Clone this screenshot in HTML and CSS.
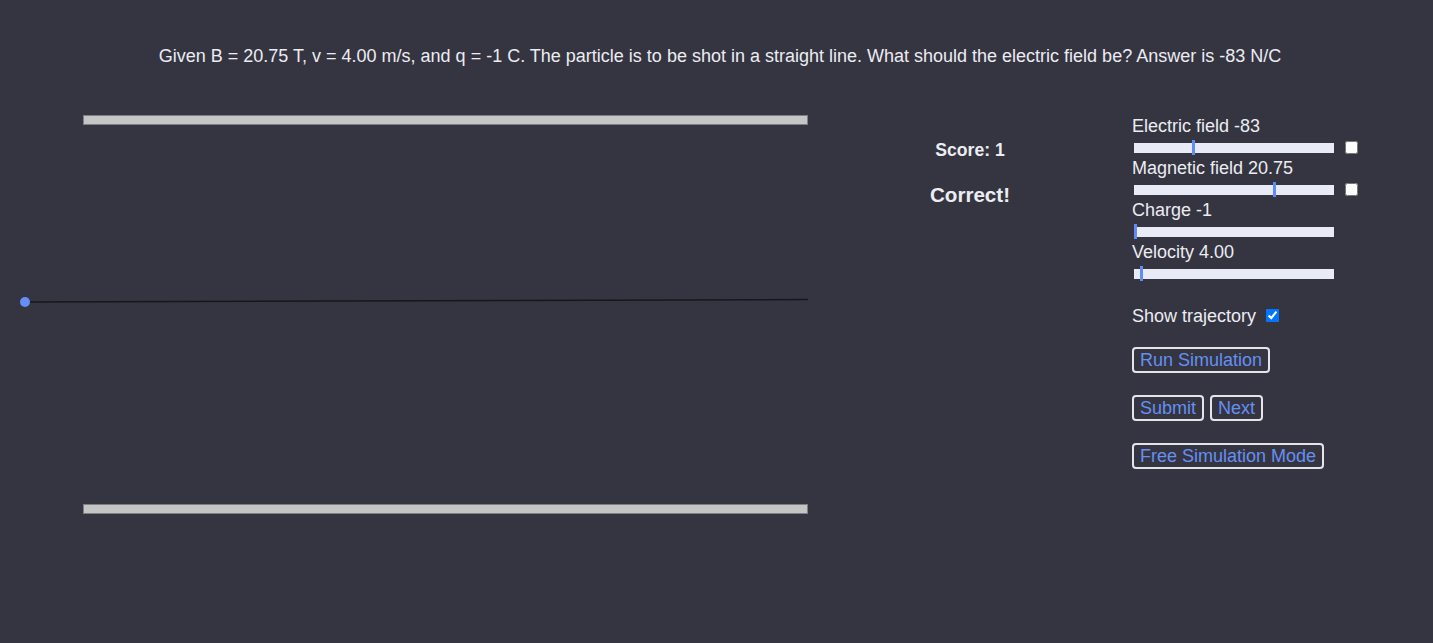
FILE: index.html
```html
<!DOCTYPE html>
<html lang="en">
<head>
<meta charset="utf-8">
<title>Velocity Selector</title>
<link rel="stylesheet" href="styles.css">
</head>
<body>
<p class="question">Given B = 20.75 T, v = 4.00 m/s, and q = -1 C. The particle is to be shot in a straight line. What should the electric field be? Answer is -83 N/C</p>
<main class="main">
  <svg class="sim" width="820" height="440" viewBox="0 0 820 440">
    <rect x="83.5" y="15.5" width="724" height="9" fill="#c5c5c5" stroke="#7e7e86" stroke-width="1"/>
    <rect x="83.5" y="404.5" width="724" height="9" fill="#c5c5c5" stroke="#7e7e86" stroke-width="1"/>
    <path d="M25 202 L808 199.6" stroke="#17171b" stroke-width="1.5" fill="none"/>
    <circle cx="25" cy="202" r="5" fill="#6490f5"/>
  </svg>
  <section class="status">
    <p class="score">Score: 1</p>
    <h3 class="result">Correct!</h3>
  </section>
  <section class="controls">
    <div class="control">
      <label class="control-label">Electric field -83</label>
      <div class="slider-row">
        <input type="range" class="slider" min="-200" max="200" step="1" value="-83">
        <input type="checkbox" class="check">
      </div>
    </div>
    <div class="control">
      <label class="control-label">Magnetic field 20.75</label>
      <div class="slider-row">
        <input type="range" class="slider" min="-50" max="50" step="0.01" value="20.75">
        <input type="checkbox" class="check">
      </div>
    </div>
    <div class="control">
      <label class="control-label">Charge -1</label>
      <div class="slider-row">
        <input type="range" class="slider" min="-1" max="1" step="1" value="-1">
      </div>
    </div>
    <div class="control">
      <label class="control-label">Velocity 4.00</label>
      <div class="slider-row">
        <input type="range" class="slider" min="1" max="100" step="0.01" value="4">
      </div>
    </div>
    <label class="toggle">Show trajectory <input type="checkbox" class="check toggle-check" checked></label>
    <div class="btn-row first"><button class="btn">Run Simulation</button></div>
    <div class="btn-row"><button class="btn">Submit</button><button class="btn">Next</button></div>
    <div class="btn-row"><button class="btn">Free Simulation Mode</button></div>
  </section>
</main>
</body>
</html>
```
FILE: styles.css
```css
html, body {
  margin: 0;
  padding: 0;
}
body {
  background: #343541;
  color: #ececf1;
  font-family: "Liberation Sans", Arial, Helvetica, sans-serif;
  font-size: 18px;
  line-height: 20px;
  min-height: 643px;
}
.question {
  margin: 46px 0 0 0;
  padding-left: 7px;
  height: 54px;
  text-align: center;
}
.main {
  display: flex;
  align-items: flex-start;
}
.sim {
  flex: none;
  display: block;
}
.status {
  flex: none;
  width: 300px;
  padding-top: 40px;
  text-align: center;
}
.score {
  margin: 0;
  font-size: 17.6px;
  font-weight: bold;
}
.result {
  margin: 23px 0 0 0;
  font-size: 20.6px;
  line-height: 24px;
  font-weight: bold;
}
.controls {
  flex: none;
  margin-left: 12px;
  padding-top: 15.6px;
  display: flex;
  flex-direction: column;
}
.control-label {
  display: block;
  line-height: 20px;
}
.slider-row {
  display: flex;
  align-items: center;
  height: 10px;
  margin: 7px 0 5px 2px;
}
.slider {
  -webkit-appearance: none;
  appearance: none;
  width: 200px;
  height: 10px;
  margin: 0;
  padding: 0;
  background: transparent;
  outline: none;
}
.slider::-webkit-slider-runnable-track {
  height: 10px;
  background: #e8eaf6;
  border: none;
}
.slider::-webkit-slider-thumb {
  -webkit-appearance: none;
  appearance: none;
  width: 3px;
  height: 15px;
  margin-top: -2.5px;
  background: #5f8cf5;
  border: none;
  border-radius: 0;
}
.check {
  width: 13px;
  height: 13px;
  margin: 0 0 0 11px;
  flex: none;
}
.toggle {
  margin-top: 22px;
  display: flex;
  align-items: center;
  line-height: 20px;
}
.toggle-check {
  margin-left: 10px;
}
.btn-row {
  display: flex;
  gap: 6px;
  margin-top: 22px;
}
.btn-row.first {
  margin-top: 21px;
}
.btn {
  font-family: inherit;
  font-size: 18px;
  line-height: 20px;
  color: #6690f0;
  background: transparent;
  border: 2px solid #e4e4ea;
  border-radius: 4px;
  padding: 1px 6px;
  margin: 0;
}
```
